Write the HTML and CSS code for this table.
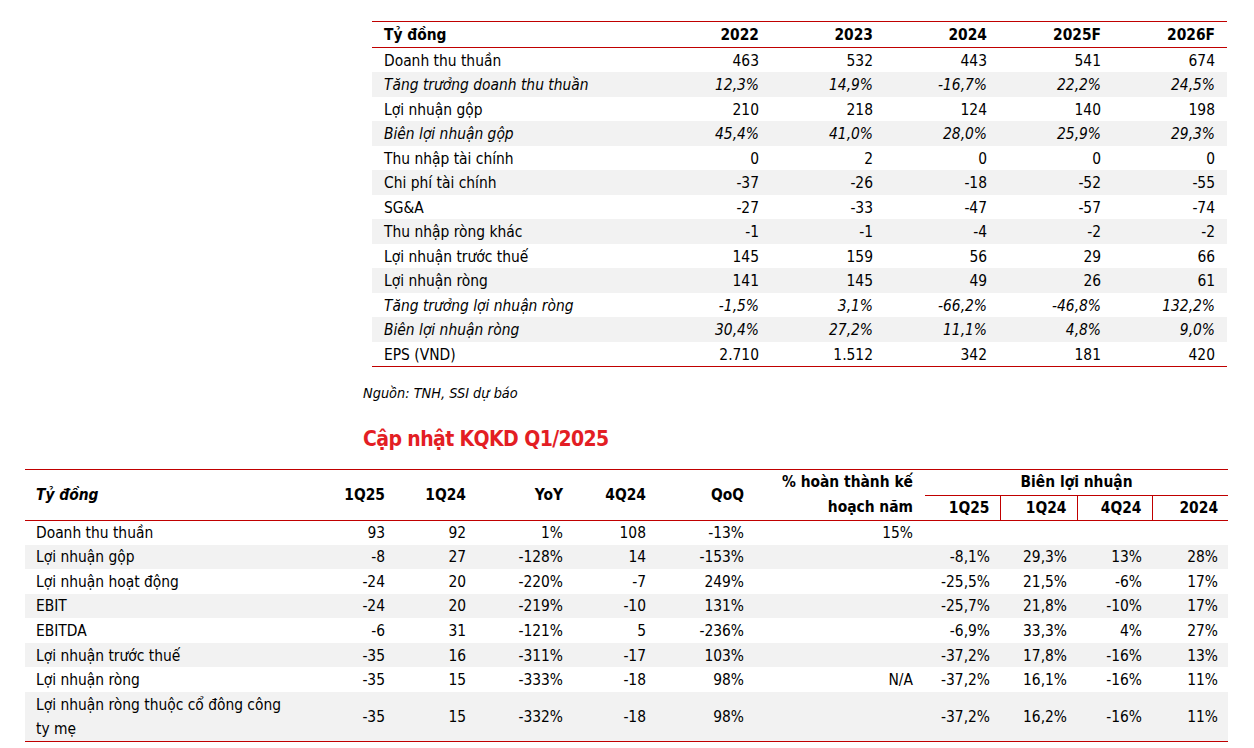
FILE: index.html
```html
<!DOCTYPE html>
<html lang="vi">
<head>
<meta charset="utf-8">
<link rel="stylesheet" href="styles.css">
</head>
<body>
<div class="page">
  <section class="forecast">
    <table class="fin fin-top">
      <colgroup>
        <col class="c-label-top">
        <col class="c-num"><col class="c-num"><col class="c-num"><col class="c-num"><col class="c-num">
      </colgroup>
      <thead>
        <tr><th class="lbl">Tỷ đồng</th><th>2022</th><th>2023</th><th>2024</th><th>2025F</th><th>2026F</th></tr>
      </thead>
      <tbody>
        <tr><td class="lbl">Doanh thu thuần</td><td>463</td><td>532</td><td>443</td><td>541</td><td>674</td></tr>
        <tr class="alt it"><td class="lbl">Tăng trưởng doanh thu thuần</td><td>12,3%</td><td>14,9%</td><td>-16,7%</td><td>22,2%</td><td>24,5%</td></tr>
        <tr><td class="lbl">Lợi nhuận gộp</td><td>210</td><td>218</td><td>124</td><td>140</td><td>198</td></tr>
        <tr class="alt it"><td class="lbl">Biên lợi nhuận gộp</td><td>45,4%</td><td>41,0%</td><td>28,0%</td><td>25,9%</td><td>29,3%</td></tr>
        <tr><td class="lbl">Thu nhập tài chính</td><td>0</td><td>2</td><td>0</td><td>0</td><td>0</td></tr>
        <tr class="alt"><td class="lbl">Chi phí tài chính</td><td>-37</td><td>-26</td><td>-18</td><td>-52</td><td>-55</td></tr>
        <tr><td class="lbl">SG&amp;A</td><td>-27</td><td>-33</td><td>-47</td><td>-57</td><td>-74</td></tr>
        <tr class="alt"><td class="lbl">Thu nhập ròng khác</td><td>-1</td><td>-1</td><td>-4</td><td>-2</td><td>-2</td></tr>
        <tr><td class="lbl">Lợi nhuận trước thuế</td><td>145</td><td>159</td><td>56</td><td>29</td><td>66</td></tr>
        <tr class="alt"><td class="lbl">Lợi nhuận ròng</td><td>141</td><td>145</td><td>49</td><td>26</td><td>61</td></tr>
        <tr class="it"><td class="lbl">Tăng trưởng lợi nhuận ròng</td><td>-1,5%</td><td>3,1%</td><td>-66,2%</td><td>-46,8%</td><td>132,2%</td></tr>
        <tr class="alt it"><td class="lbl">Biên lợi nhuận ròng</td><td>30,4%</td><td>27,2%</td><td>11,1%</td><td>4,8%</td><td>9,0%</td></tr>
        <tr><td class="lbl">EPS (VND)</td><td>2.710</td><td>1.512</td><td>342</td><td>181</td><td>420</td></tr>
      </tbody>
    </table>
    <p class="source">Nguồn: TNH, SSI dự báo</p>
    <h2 class="title">Cập nhật KQKD Q1/2025</h2>
  </section>

  <table class="fin fin-bottom">
    <colgroup>
      <col class="b-label">
      <col class="b-q1"><col class="b-q2"><col class="b-yoy"><col class="b-q3"><col class="b-qoq"><col class="b-plan">
      <col class="b-m1"><col class="b-m2"><col class="b-m3"><col class="b-m4">
    </colgroup>
    <thead>
      <tr class="h1">
        <th class="lbl it" rowspan="2">Tỷ đồng</th>
        <th rowspan="2">1Q25</th>
        <th rowspan="2">1Q24</th>
        <th rowspan="2">YoY</th>
        <th rowspan="2">4Q24</th>
        <th rowspan="2">QoQ</th>
        <th class="plan1">% hoàn thành kế</th>
        <th class="group" colspan="4">Biên lợi nhuận</th>
      </tr>
      <tr class="h2">
        <th class="plan2">hoạch năm</th>
        <th class="sub">1Q25</th>
        <th class="sub sep">1Q24</th>
        <th class="sub sep">4Q24</th>
        <th class="sub sep">2024</th>
      </tr>
    </thead>
    <tbody>
      <tr><td class="lbl">Doanh thu thuần</td><td>93</td><td>92</td><td>1%</td><td>108</td><td>-13%</td><td>15%</td><td></td><td></td><td></td><td></td></tr>
      <tr class="alt"><td class="lbl">Lợi nhuận gộp</td><td>-8</td><td>27</td><td>-128%</td><td>14</td><td>-153%</td><td></td><td>-8,1%</td><td>29,3%</td><td>13%</td><td>28%</td></tr>
      <tr><td class="lbl">Lợi nhuận hoạt động</td><td>-24</td><td>20</td><td>-220%</td><td>-7</td><td>249%</td><td></td><td>-25,5%</td><td>21,5%</td><td>-6%</td><td>17%</td></tr>
      <tr class="alt"><td class="lbl">EBIT</td><td>-24</td><td>20</td><td>-219%</td><td>-10</td><td>131%</td><td></td><td>-25,7%</td><td>21,8%</td><td>-10%</td><td>17%</td></tr>
      <tr><td class="lbl">EBITDA</td><td>-6</td><td>31</td><td>-121%</td><td>5</td><td>-236%</td><td></td><td>-6,9%</td><td>33,3%</td><td>4%</td><td>27%</td></tr>
      <tr class="alt"><td class="lbl">Lợi nhuận trước thuế</td><td>-35</td><td>16</td><td>-311%</td><td>-17</td><td>103%</td><td></td><td>-37,2%</td><td>17,8%</td><td>-16%</td><td>13%</td></tr>
      <tr><td class="lbl">Lợi nhuận ròng</td><td>-35</td><td>15</td><td>-333%</td><td>-18</td><td>98%</td><td>N/A</td><td>-37,2%</td><td>16,1%</td><td>-16%</td><td>11%</td></tr>
      <tr class="alt tall"><td class="lbl">Lợi nhuận ròng thuộc cổ đông công<br>ty mẹ</td><td>-35</td><td>15</td><td>-332%</td><td>-18</td><td>98%</td><td></td><td>-37,2%</td><td>16,2%</td><td>-16%</td><td>11%</td></tr>
    </tbody>
  </table>
</div>
</body>
</html>
```

FILE: styles.css
```css
html, body {
  margin: 0;
  padding: 0;
  background: #ffffff;
}

body {
  font-family: "DejaVu Sans Condensed", "Liberation Sans", sans-serif;
  color: #000000;
  font-size: 15.4px;
}

.page {
  width: 1254px;
  height: 748px;
  overflow: hidden;
  padding-top: 21px;
  box-sizing: border-box;
}

.forecast {
  margin-left: 372px;
}

.fin {
  border-collapse: collapse;
  table-layout: fixed;
}

.fin th,
.fin td {
  padding: 0 12px 0 0;
  text-align: right;
  white-space: nowrap;
  line-height: 20px;
  font-weight: normal;
}

.fin .lbl {
  text-align: left;
  padding-left: 12px;
}

.fin thead th {
  font-weight: bold;
}

/* Top table */
.fin-top {
  width: 855px;
  border-top: 1px solid #c00000;
  border-bottom: 1px solid #c00000;
}

.c-label-top { width: 285px; }
.c-num { width: 114px; }

.fin-top thead tr {
  border-bottom: 1px solid #c00000;
}

.fin-top thead th {
  height: 24px;
  padding-top: 1px;
}

.fin-top tbody td {
  height: 24.5px;
  padding-top: 2px;
  box-sizing: border-box;
}

.alt {
  background: #f2f2f2;
}

.it td,
.it {
  font-style: italic;
}

.source {
  margin: 16px 0 0 -9px;
  font-style: italic;
  font-size: 14.4px;
  line-height: 20px;
}

.title {
  margin: 21px 0 0 -9px;
  color: #e31e24;
  font-size: 21px;
  letter-spacing: -0.6px;
  line-height: 30px;
  font-weight: bold;
}

/* Bottom table */
.fin-bottom {
  margin: 15px 0 0 25px;
  width: 1203px;
  border-top: 1px solid #c00000;
  border-bottom: 1px solid #c00000;
}

.b-label { width: 292px; }
.b-q1 { width: 80px; }
.b-q2 { width: 81px; }
.b-yoy { width: 97px; }
.b-q3 { width: 83px; }
.b-qoq { width: 98px; }
.b-plan { width: 169px; }
.b-m1 { width: 75px; }
.b-m2 { width: 77px; }
.b-m3 { width: 75px; }
.b-m4 { width: 76px; }

.fin-bottom .lbl {
  padding-left: 11px;
}

.fin-bottom thead .h1 th { height: 25px; }
.fin-bottom thead .h2 th { height: 24px; }
.fin-bottom thead .h2 {
  border-bottom: 1px solid #c00000;
}

.fin-bottom th.it { font-style: italic; }

.fin-bottom .group {
  text-align: center;
  padding: 0;
  border-bottom: 1px solid #c00000;
}

.fin-bottom .sub {
  padding-right: 10px;
}

.fin-bottom .sep {
  border-left: 1px solid #c00000;
}

.fin-bottom tbody td {
  height: 24.55px;
  padding-top: 1px;
  box-sizing: border-box;
  padding-right: 12px;
}

.fin-bottom tbody tr.tall td { height: 50px; }

.fin-bottom tbody td:nth-child(n+8) { padding-right: 10px; }

.fin-bottom .tall .lbl {
  line-height: 24px;
  padding-top: 0;
}
```
